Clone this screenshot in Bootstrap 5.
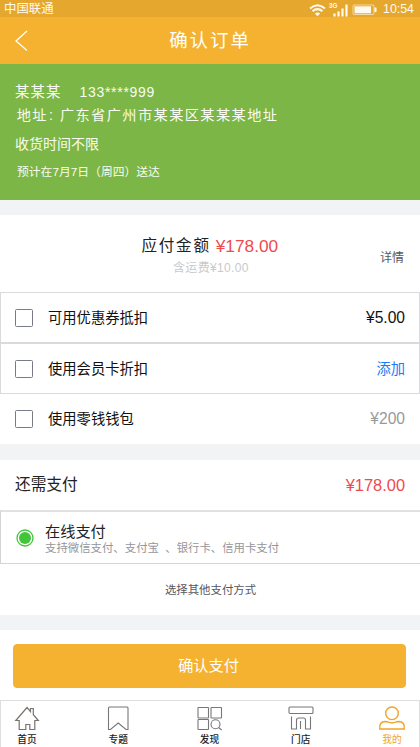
<!DOCTYPE html>
<html lang="zh-CN">
<head>
<meta charset="utf-8">
<meta name="viewport" content="width=device-width, initial-scale=1">
<title>确认订单</title>
<link href="https://cdn.jsdelivr.net/npm/bootstrap@5.3.0/dist/css/bootstrap.min.css" rel="stylesheet">
<style>
body{font-family:"Liberation Sans","Noto Sans CJK SC",sans-serif;background:#fff;color:#222;line-height:20px;overflow:hidden}
svg{display:block;flex:none}
.page{height:747px;white-space:nowrap}
.status{height:17px;background:#e6a72e;color:#fffaf0;font-size:12.4px;line-height:17px;padding:2px 6px 0 4px}
.status svg{margin-top:-1px}
.clock{margin-left:6px}
.topbar{height:47px;background:#f5b230;color:#fff;padding:0 15px}
.topbar h1{font-size:18.5px;letter-spacing:1.9px;line-height:28px;padding-top:1px}
.edge{width:14px}
.address{height:136px;background:#7cb646;color:#f8fcf2;padding:18px 15px 0}
.who{font-size:14.4px;letter-spacing:1.1px}
.phone{font-size:14px;letter-spacing:.7px;margin-left:18px}
.where{font-size:14.2px;letter-spacing:1.42px;margin:3px 0 0 1.7px}
.colon{display:inline-block;width:12px;padding-left:1px}
.when{font-size:14px;margin-top:9px}
.eta{font-size:11.8px;margin:8px 0 0 2px}
.gap-bar{background:#f2f3f5;height:15px}
.gap-bar.wide{height:16px}
.due{height:77px;padding:21px 16px 0 141.5px}
.due-label{font-size:15.6px;letter-spacing:1.7px}
.price{color:#ef4a4d}
.due-price{font-size:17.3px;margin-left:5px}
.freight{font-size:12px;letter-spacing:.35px;color:#c9c9cc;line-height:16px;margin:4px 0 0 31.5px}
.detail{font-size:12px;color:#555960;margin-top:12px}
.option{height:50px;padding:0 15px;font-size:14.3px;color:#111}
.option.boxed{height:51px;border:1px solid #dadadc;padding:0 14px}
.option .form-check-input{width:18px;height:18px;border:1px solid #777b87;border-radius:1.5px;margin:0 15px 0 0;flex:none;background-color:#fff}
.amount{font-size:15.6px}
.muted-amount{color:#999}
.add-link{color:#1a7df5;text-decoration:none}
.remain{height:50px;padding:0 15px;font-size:15.7px}
.remain .price{font-size:16.4px}
.online{height:54px;border:solid #d4d4d6;border-width:2px 0 1px 1px;border-top-color:#e1e1e3;padding:0 14.5px}
.pay-name{font-size:15.2px;line-height:19px;padding-top:3px}
.pay-note{font-size:11.4px;line-height:15px;color:#96969b}
.pay-text{margin-left:11.5px}
.other{height:51px;font-size:11.4px;color:#55585f;padding-left:1px}
.pay-area{height:70px;padding:14px 14px 12px 13px}
.btn-pay{--bs-btn-color:#fff;--bs-btn-bg:#f5b230;--bs-btn-border-color:#f5b230;--bs-btn-hover-bg:#e6a72e;--bs-btn-hover-color:#fff;height:44px;font-size:15.2px;border-radius:4px;padding:1px 2px 0 0}
.tabs{height:47px;border:1px solid #dededf;border-bottom:0;padding:5px 12px 0 11px}
.tab{width:30px;font-size:9.7px;line-height:14px;font-weight:500;color:#222;text-decoration:none;letter-spacing:.1px}
.tab svg{margin-bottom:2px}
.tab.current{color:#f0a52c;font-weight:400}
</style>
<script src="https://cdn.jsdelivr.net/npm/bootstrap@5.3.0/dist/js/bootstrap.bundle.min.js"></script>
</head>
<body>
<div class="page d-flex flex-column">
  <div class="status d-flex align-items-center justify-content-between">
    <span>中国联通</span>
    <div class="d-flex align-items-center">
      <svg width="68" height="17" viewBox="0 0 68 17" fill="none" stroke="#fffaf0">
        <path d="M1 7.500Q8.500 1 16 7.500M3.500 10.300Q8.500 6 13.500 10.300" stroke-width="2"/>
        <path d="M5.800 12.500Q8.500 10.300 11.200 12.500L8.500 15.300Z" fill="#fffaf0" stroke="none"/>
        <path d="M25.500 15.500v-3M29.500 15.500v-5M33.500 15.500v-8M37.500 15.500V3.500" stroke-width="2.200"/>
        <text x="20" y="7" font-size="6.400" font-weight="700" fill="#fffaf0" stroke="none">3G</text>
        <rect x="44" y="4" width="21" height="9.500" rx="1" stroke-opacity=".6"/>
        <path d="M45.500 5.300h16.500v7H45.500z" fill="#fffaf0" stroke="none"/>
        <path d="M66.500 6.500v4.500" stroke-width="2"/>
      </svg>
      <span class="clock">10:54</span>
    </div>
  </div>
  <header class="topbar d-flex align-items-center justify-content-between">
    <svg class="edge" width="14" height="22" viewBox="0 0 14 22" fill="none" stroke="#fff" stroke-width="1.300"><path d="M12 1 1 11 12 20.500"/></svg>
    <h1 class="m-0 fw-normal">确认订单</h1>
    <span class="edge"></span>
  </header>

  <section class="address">
    <div class="d-flex"><span class="who">某某某</span><span class="phone">133****999</span></div>
    <div class="where">地址<span class="colon">:</span>广东省广州市某某区某某某地址</div>
    <div class="when">收货时间不限</div>
    <div class="eta">预计在7月7日（周四）送达</div>
  </section>
  <div class="gap-bar"></div>

  <section class="due d-flex justify-content-between">
    <div>
      <div class="d-flex"><span class="due-label">应付金额</span><span class="due-price price">¥178.00</span></div>
      <div class="freight">含运费¥10.00</div>
    </div>
    <span class="detail align-self-start">详情</span>
  </section>

  <label class="option boxed d-flex align-items-center"><input class="form-check-input" type="checkbox"><span class="flex-fill">可用优惠券抵扣</span><span class="amount">¥5.00</span></label>
  <label class="option boxed d-flex align-items-center"><input class="form-check-input" type="checkbox"><span class="flex-fill">使用会员卡折扣</span><a class="add-link" href="#">添加</a></label>
  <label class="option d-flex align-items-center"><input class="form-check-input" type="checkbox"><span class="flex-fill">使用零钱钱包</span><span class="amount muted-amount">¥200</span></label>
  <div class="gap-bar wide"></div>

  <div class="remain d-flex align-items-center justify-content-between"><span>还需支付</span><span class="price">¥178.00</span></div>
  <div class="online d-flex align-items-center">
    <svg width="18" height="18" viewBox="0 0 18 18"><circle cx="9" cy="9" r="8" fill="#fff" stroke="#43c53b" stroke-width="1.300"/><circle cx="9" cy="9" r="6" fill="#43c53b"/></svg>
    <div class="pay-text"><div class="pay-name">在线支付</div><div class="pay-note">支持微信支付、支付宝&nbsp; 、银行卡、信用卡支付</div></div>
  </div>
  <div class="other d-flex align-items-center justify-content-center">选择其他支付方式</div>
  <div class="gap-bar"></div>

  <div class="pay-area"><button class="btn btn-pay w-100 d-block" type="button">确认支付</button></div>

  <nav class="tabs d-flex justify-content-between">
    <a class="tab d-flex flex-column align-items-center" href="#">
      <svg width="26" height="25" viewBox="0 0 26 25" fill="none" stroke="#77736d" stroke-width="1.200"><path d="M1.800 14.500 13 1.500l3.500 4.200V2.500h2.800v6.200l5 5.800h-3.500v9h-5v-5h-4v5H5.200v-9Z"/></svg>首页</a>
    <a class="tab d-flex flex-column align-items-center" href="#">
      <svg width="26" height="25" viewBox="0 0 26 25" fill="none" stroke="#77777a" stroke-width="1.100"><path d="M4.500 1h17.500a1 1 0 0 1 1 1v21.500h-2L13.250 17 5.500 23.500h-2V2a1 1 0 0 1 1-1Z"/></svg>专题</a>
    <a class="tab d-flex flex-column align-items-center" href="#">
      <svg width="26" height="25" viewBox="0 0 26 25" fill="none" stroke="#77777a" stroke-width="1.100"><rect x="1" y="1.500" width="10.500" height="10.500" rx=".5"/><rect x="14" y="1.500" width="10.500" height="10.500" rx=".5"/><rect x="1" y="13.500" width="10.500" height="10" rx=".5"/><circle cx="18.500" cy="18.300" r="4.500"/><path d="m21.500 21.500 3.200 2.500"/></svg>发现</a>
    <a class="tab d-flex flex-column align-items-center" href="#">
      <svg width="26" height="25" viewBox="0 0 26 25" fill="none" stroke="#77777a" stroke-width="1.100"><rect x="1" y="1" width="24" height="6.500" rx="1"/><path d="M3.500 10.500V23h5V14q0-2 2-2h5q2 0 2 2v9h5V10.500M12.500 15v8"/></svg>门店</a>
    <a class="tab current d-flex flex-column align-items-center" href="#">
      <svg width="26" height="25" viewBox="0 0 26 25" fill="none" stroke="#f0a52c" stroke-width="1.400"><circle cx="13" cy="7.300" r="6.300"/><path d="M.8 23v-2q0-5 5-5.500 2.500 0 3.700.700 3.500 1.500 7 0 1-.700 3.700-.700 5 .500 5 5.500v2Z"/></svg>我的</a>
  </nav>
</div>
</body>
</html>
